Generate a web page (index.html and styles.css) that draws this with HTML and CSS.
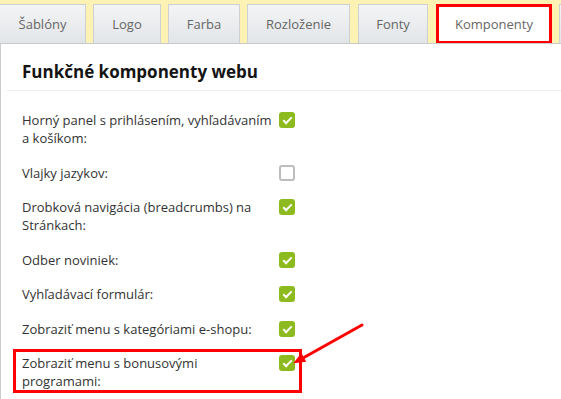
FILE: index.html
```html
<!DOCTYPE html>
<html lang="sk">
<head>
<meta charset="utf-8">
<title>Funkčné komponenty webu</title>
<link rel="stylesheet" href="styles.css">
</head>
<body>
    <!-- záložky begin -->
    <div class="tabs">
        <span class="tab t-sablony">Šablóny</span>
        <span class="tab t-logo">Logo</span>
        <span class="tab t-farba">Farba</span>
        <span class="tab t-rozlozenie">Rozloženie</span>
        <span class="tab t-fonty">Fonty</span>
        <span class="tab t-komponenty active">Komponenty</span>
        <span class="tab">&nbsp;</span>
    </div>
    <!-- záložky end -->
    <!-- obsah begin -->
    <div class="panel">
        <h2 class="title">Funkčné komponenty webu</h2>
        <ul class="list">
            <li class="row"><span class="label">Horný panel s prihlásením, vyhľadávaním a košíkom:</span><span class="cb on"></span></li>
            <li class="row"><span class="label">Vlajky jazykov:</span><span class="cb off"></span></li>
            <li class="row"><span class="label">Drobková navigácia (breadcrumbs) na Stránkach:</span><span class="cb on"></span></li>
            <li class="row"><span class="label">Odber noviniek:</span><span class="cb on"></span></li>
            <li class="row"><span class="label">Vyhľadávací formulár:</span><span class="cb on"></span></li>
            <li class="row"><span class="label">Zobraziť menu s kategóriami e-shopu:</span><span class="cb on"></span></li>
            <li class="row marked"><span class="label">Zobraziť menu s bonusovými programami:</span><span class="cb on"></span></li>
        </ul>
    </div>
    <!-- obsah end -->
    <svg class="arrow" width="80" height="50" viewBox="0 0 80 50">
        <line x1="72" y1="5" x2="13" y2="38" stroke="#f00" stroke-width="3" stroke-linecap="round"/>
        <polygon points="3.3,43.3 16.2,41.8 11.4,33" fill="#f00"/>
    </svg>
</body>
</html>
```

FILE: styles.css
```css
* { margin: 0; padding: 0; }
body { font-family: "Open Sans", "Noto Sans", sans-serif; color: #333; background: #fff; overflow: hidden; }

/*záložky*/
.tabs { display: flex; gap: 7px; height: 39px; padding-top: 4px; background: #fcf2b3; overflow: hidden; white-space: nowrap; }
.tab { flex: none; box-sizing: border-box; height: 39px; min-width: 40px; border: 1px solid #cfd0d2; border-bottom: 0; background: linear-gradient(#f3f4f5, #e2e5e8); color: #666; font-size: 13px; line-height: 38px; text-align: center; }
.t-sablony { width: 87px; margin-left: -1px; }
.t-logo { width: 68px; }
.t-farba { width: 72px; }
.t-rozlozenie { width: 103px; }
.t-fonty { width: 70px; margin-left: 1px; }
.t-komponenty { width: 116px; margin-left: 1px; }
.tab.active { position: relative; z-index: 1; height: 40px; background: #fff; outline: 3px solid #f00; outline-offset: -3px; }

/*obsah*/
.panel { border-top: 1px solid #cacbcc; border-left: 1px solid #cacbcc; height: 400px; }
.title { margin-left: 6px; padding: 16px 0 6px 15px; border-bottom: 1px solid #eee; color: #141414; font-size: 17px; line-height: 24px; font-weight: bold; }
.list { list-style: none; padding-top: 12px; }
.row { display: grid; grid-template-columns: 251px 16px; column-gap: 6px; align-items: start; padding: 8px 0 8.5px 21px; font-size: 13px; line-height: 18px; }
.row.marked { position: relative; }
.row.marked::before { content: ''; position: absolute; left: 12px; top: 3px; width: 289px; height: 44px; box-sizing: border-box; border: 3px solid #f00; }

.cb { position: relative; width: 16px; height: 16px; margin-top: 1px; box-sizing: border-box; border-radius: 3px; }
.cb.on { background: #8dbb1f; }
.cb.on::after { content: ''; position: absolute; left: 6px; top: 3px; width: 3px; height: 7px; border: solid #fff; border-width: 0 2px 2px 0; transform: rotate(45deg); }
.cb.off { background: #fff; border: 2px solid #bdbdbd; }

.arrow { position: absolute; left: 290px; top: 320px; }
```
